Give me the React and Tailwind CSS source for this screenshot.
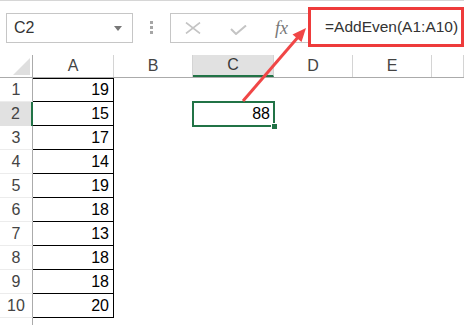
import React from 'react';

const cols = [
  { name: 'A', w: 81 },
  { name: 'B', w: 79 },
  { name: 'C', w: 81 },
  { name: 'D', w: 79 },
  { name: 'E', w: 79 },
  { name: '', w: 32 },
];

const valuesA = [19, 15, 17, 14, 19, 18, 13, 18, 18, 20];

export default function App() {
  return (
    <div className="relative w-[464px] h-[325px] bg-white overflow-hidden font-['Liberation_Sans',sans-serif] text-[#222]">
      {/* toolbar */}
      <div className="h-[55px] border-t border-[#d6d6d6] flex items-start pt-[12px] pl-[6px]">
        <div className="w-[127px] h-[30px] border border-[#c6c6c6] flex items-center justify-between pl-[7px] pr-[10px]">
          <span className="text-[16px] text-[#333]">C2</span>
          <span className="w-0 h-0 border-l-[4px] border-r-[4px] border-t-[5px] border-l-transparent border-r-transparent border-t-[#777]" />
        </div>
        <div className="flex flex-col gap-[2px] ml-[17px] mt-[8px]">
          <span className="w-[3px] h-[3px] bg-[#a6a6a6]" />
          <span className="w-[3px] h-[3px] bg-[#a6a6a6]" />
          <span className="w-[3px] h-[3px] bg-[#a6a6a6]" />
        </div>
        <div className="ml-[17px] flex-1 h-[30px] border border-r-0 border-[#c6c6c6] flex items-center">
          <svg width="16" height="12" viewBox="0 0 16 12" className="ml-[14px]">
            <path d="M1 0.5 L15 11.5 M15 0.5 L1 11.5" stroke="#c4c4c4" strokeWidth="1.6" fill="none" />
          </svg>
          <svg width="17" height="10" viewBox="0 0 17 10" className="ml-[29px] mt-[3px]">
            <path d="M1 4 L6 9 L16 0.5" stroke="#c4c4c4" strokeWidth="2" fill="none" />
          </svg>
          <span className="ml-[28px] font-['Liberation_Serif',serif] italic text-[18px] text-[#777] leading-none">fx</span>
        </div>
      </div>

      {/* header row */}
      <div className="flex h-[23px] border-b border-[#ababab]">
        <div className="w-[33px] shrink-0 relative border-r border-[#ababab]">
          <svg width="17" height="17" viewBox="0 0 17 17" className="absolute right-[2px] bottom-[2px]">
            <polygon points="17,0 17,17 0,17" fill="#dfdfdf" />
          </svg>
        </div>
        {cols.map((c) => (
          <div
            key={c.name || 'x'}
            style={{ width: c.w }}
            className={
              c.name === 'C'
                ? 'shrink-0 flex items-center justify-center text-[16px] text-[#3a3a3a] bg-[#e1e1e1] border-b-2 border-[#217346] border-r border-r-[#d4d4d4]'
                : 'shrink-0 flex items-center justify-center text-[16px] text-[#444] border-r border-[#d4d4d4]'
            }
          >
            {c.name}
          </div>
        ))}
      </div>

      {/* rows */}
      {valuesA.map((v, i) => (
        <div key={i} className="flex h-[24px]">
          <div
            className={
              i === 1
                ? 'w-[33px] shrink-0 flex items-center justify-center text-[16px] text-[#444] bg-[#e1e1e1] border-r-2 border-[#217346]'
                : 'w-[33px] shrink-0 flex items-center justify-center text-[16px] text-[#444] border-r border-[#ababab] border-b border-b-[#ececec]'
            }
          >
            {i + 1}
          </div>
          <div className={`w-[81px] shrink-0 border-r border-b border-black ${i === 0 ? 'border-t' : ''} flex items-center justify-end pr-[4px] text-[16px] text-black`}>
            {v}
          </div>
          <div className="w-[79px] shrink-0" />
          <div className="w-[81px] shrink-0 relative">
            {i === 1 && (
              <>
                <div className="absolute -top-[1px] -left-[1px] -right-[1px] -bottom-[1px] border-2 border-[#217346] flex items-center justify-end pr-[3px] text-[16px] text-black">
                  88
                </div>
                <div className="absolute -right-[4px] -bottom-[4px] w-[7px] h-[7px] bg-[#217346] border border-white" />
              </>
            )}
          </div>
        </div>
      ))}
      <div className="w-[33px] h-[7px] border-r border-[#ababab]" />

      {/* annotation: red box */}
      <div className="absolute left-[308px] top-[7px] w-[156px] h-[40px] border-[3px] border-[#ee3b3b] bg-white flex items-center pl-[14px] text-[15.5px] text-[#333]">
        =AddEven(A1:A10)
      </div>

      {/* annotation: arrow */}
      <svg className="absolute left-0 top-0" width="464" height="325" viewBox="0 0 464 325">
        <line x1="243" y1="101" x2="299" y2="36" stroke="#f04646" strokeWidth="3" />
        <polygon points="306,28 301.5,42 292.5,34.5" fill="#f04646" />
      </svg>
    </div>
  );
}
